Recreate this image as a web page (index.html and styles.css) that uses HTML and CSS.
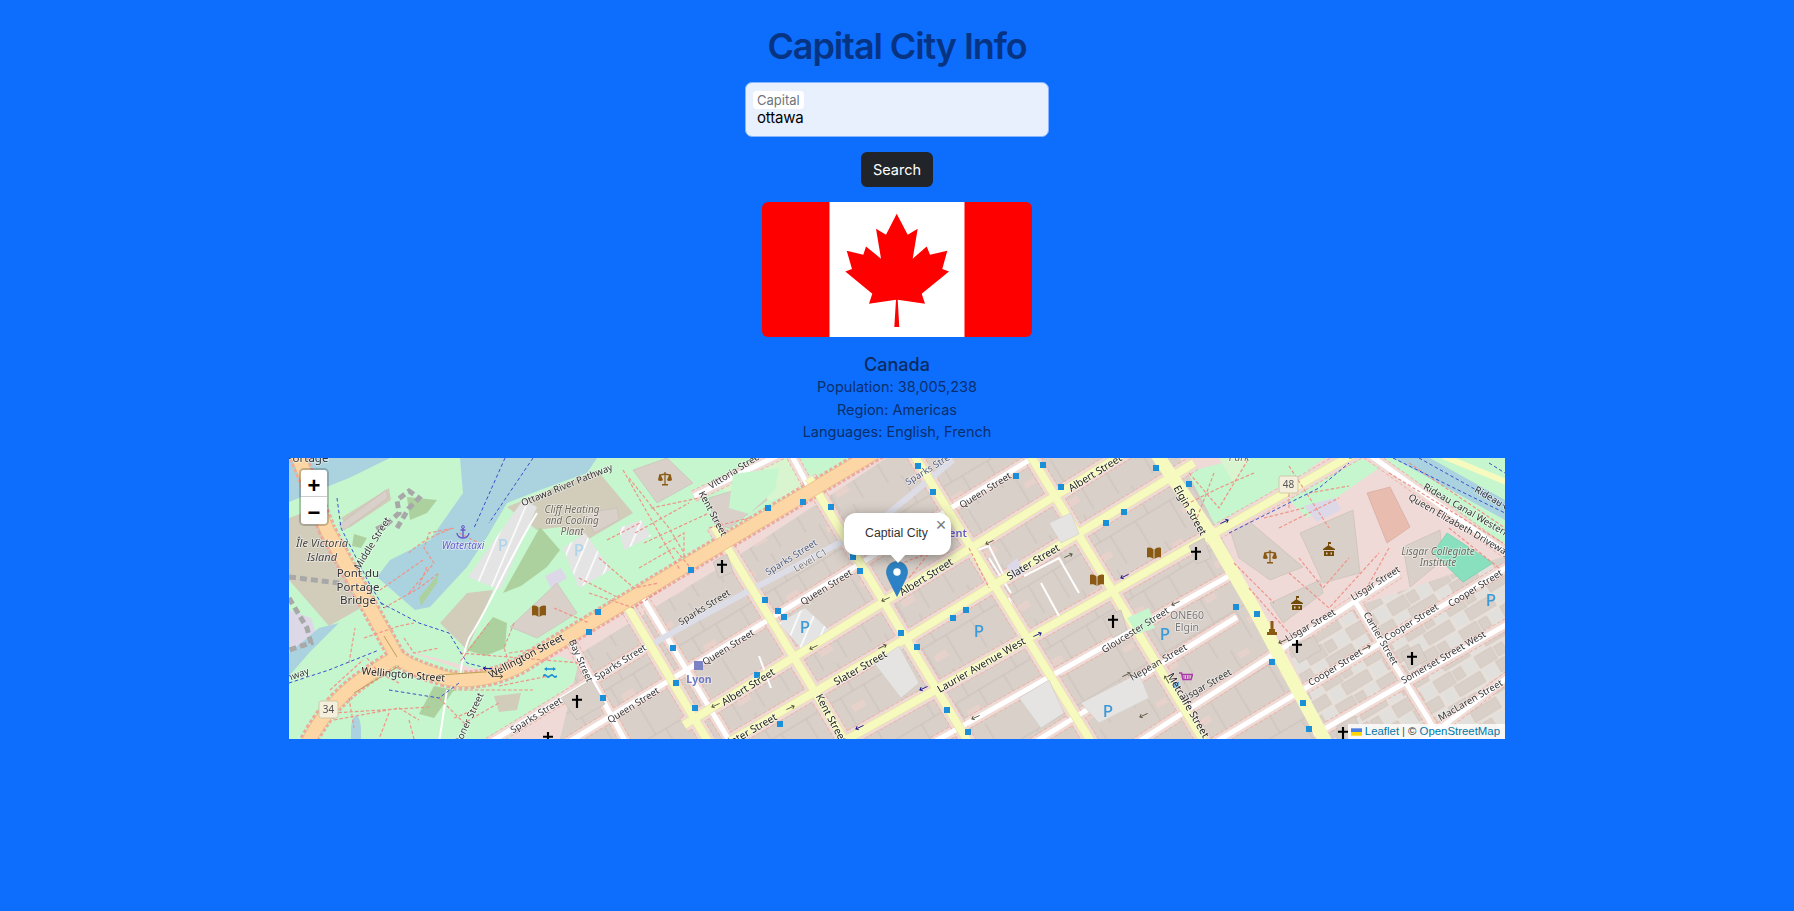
FILE: index.html
```html
<!DOCTYPE html>
<html lang="en">
<head>
<meta charset="utf-8">
<title>Capital City Info</title>
<link rel="stylesheet" href="styles.css">
</head>
<body>
<main class="app">
  <h1 class="title">Capital City Info</h1>
  <form class="search">
    <div class="field">
      <label class="field-label">Capital</label>
      <div class="field-value">ottawa</div>
    </div>
    <button class="btn" type="button">Search</button>
  </form>
  <svg class="flag" viewBox="0 0 270 135" width="270" height="135">
    <rect width="270" height="135" fill="#f00"/>
    <rect x="67.5" width="135" height="135" fill="#fff"/>
    <path fill="#f00" d="M134.7 11.7 145.7 32.7 155.7 26.7 150.7 56.7 164.7 44.4 168 52.7 185.3 48.7 180.3 67 187 69.4 159.7 91.7 163 101.7 135.7 97.7 137.3 125 132.3 125 134 97.7 107 101.7 110.3 91.7 83.3 69.4 90 67 84.7 48.7 101.3 52.7 104 44.4 119 56.7 114 26.7 124 32.7Z"/>
  </svg>
  <section class="info">
    <h2 class="country">Canada</h2>
    <p>Population: 38,005,238</p>
    <p>Region: Americas</p>
    <p>Languages: English, French</p>
  </section>
  <div class="map">
    <svg class="tiles" viewBox="0 0 1216 281" width="1216" height="281">
      <defs>
        <pattern id="bld" width="96" height="64" patternUnits="userSpaceOnUse" patternTransform="rotate(-31) translate(6 10)">
          <rect width="96" height="64" fill="#d9d0c9"/>
          <path d="M0 32H96M30 0V32M70 0V32M15 32V64M55 32V64M82 32V64" fill="none" stroke="#c6bcb3" stroke-width=".7"/>
          <rect x="34" y="6" width="12" height="6" fill="#e6d2ca"/>
          <rect x="60" y="44" width="14" height="7" fill="#e6d2ca"/>
        </pattern>
        <pattern id="bld2" width="48" height="30" patternUnits="userSpaceOnUse" patternTransform="rotate(-31)">
          <rect width="48" height="30" fill="#e8e0da"/>
          <rect x="1" y="1" width="20" height="13" fill="#d9d0c9" stroke="#c9bfb6" stroke-width=".5"/>
          <rect x="23" y="2" width="10" height="11" fill="#d9d0c9" stroke="#c9bfb6" stroke-width=".5"/>
          <rect x="35" y="1" width="12" height="13" fill="#e2e0dc"/>
          <rect x="3" y="16" width="12" height="12" fill="#e2e0dc"/>
          <rect x="17" y="16" width="30" height="12" fill="#d9d0c9" stroke="#c9bfb6" stroke-width=".5"/>
        </pattern>
        <pattern id="lot" width="10" height="14" patternUnits="userSpaceOnUse" patternTransform="rotate(-67)">
          <rect width="10" height="14" fill="#e4e4e4"/>
          <rect y="12" width="10" height="1.5" fill="#fff"/>
        </pattern>
        <path id="wp" d="M270 290 760 -10M195 288 358 189M730 294 948 159M645 284 940 118M840 290 1068 142 1110 115M925 285 1220 108M1025 277 1220 165M1130 286 1220 218M1064 140 1140 262 1160 300M283 186 340 290M354 140 440 282M405 38 500 -8M503 -2 523 35M1078 -5 1222 98"/>
        <path id="yp" d="M395 267 860 -20M440 284 618 180 905 5M548 287 831 129 1054 2 1090 -18M425 68 560 290M520 20 680 285M622 -8 806 290M738 -8 922 295M338 148 420 285"/>
        <path id="ep" d="M865 -8 921 75 964 149 1040 290"/>
        <path id="op" d="M590 -8 411 99 240 202C210 222 170 226 150 218 130 212 115 205 108 199L38 72 22 30 8 -4M108 199C70 222 40 240 15 292"/>
        <symbol id="cross" viewBox="0 0 14 18"><path d="M5.500 0h3v5H14v3H8.500V18h-3V8H0V5h5.500z" fill="#000"/></symbol>
        <symbol id="book" viewBox="0 0 14 12"><path d="M0 1c3-1 5 0 6.500 1.500V12C5 10.500 3 10 0 10.500zM14 1c-3-1-5 0-6.500 1.500V12c1.500-1.500 3.500-2 6.500-1.500z" fill="#8a5a14"/></symbol>
        <symbol id="scales" viewBox="0 0 14 14"><path d="M6.400 0h1.200v1.500L13 2.500V3.500L14 8a2.800 2 0 0 1-5 0l2-4.500-3.400-.6V12H10v1.500H4V12h2.400V2.900L3 3.500 5 8a2.800 2 0 0 1-5 0l1-4.500V2.500l5.400-1z" fill="#8a5a14"/></symbol>
        <symbol id="museum" viewBox="0 0 12 14"><path d="M5 0h3v2H6v1.500L12 7v1H0V7l5-3.500zM1 9h10v5H1zm2 1.500v2h1.500v-2zm4.500 0v2H9v-2z" fill="#734a08"/></symbol>
        <symbol id="statue" viewBox="0 0 10 14"><path d="M3.500 0h3v8h-3zM2 8h6v3H2zM0 11h10v3H0z" fill="#8a5a14"/></symbol>
        <symbol id="anchor" viewBox="0 0 14 14"><path d="M7 3v10M4.500 5h5M1 8c0 3 3 5 6 5s6-2 6-5" fill="none" stroke="#6a5bc9" stroke-width="1.400"/><circle cx="7" cy="2" r="1.400" fill="none" stroke="#6a5bc9"/></symbol>
        <symbol id="cart" viewBox="0 0 14 12"><path d="M0 1h2.500L4 7.500h8L13.500 2.500H3M5 10.500h.1M11 10.500h.1" fill="none" stroke="#ac39ac" stroke-width="1.500"/><path d="M5 3.500v3M7.500 3.500v3M10 3.500v3" stroke="#ac39ac"/></symbol>
        <symbol id="wave" viewBox="0 0 14 12"><path d="M1 2l3-2v1.300h6V0l3 2-3 2V2.800H4V4zM0 8q2-2 3.500 0t3.500 0 3.500 0 3.500 0v2q-2 2-3.500 0t-3.500 0-3.500 0-3.500 0z" fill="#1b8fd8"/></symbol>
        <symbol id="arr" viewBox="0 0 12 6"><path d="M12 3H2M4.500 .5 1.500 3l3 2.500" fill="none" stroke-width="1.100"/></symbol>
      </defs>

      <!-- land -->
      <rect class="l-pink" width="1216" height="281"/>
      <path class="l-park" d="M0 0H590L411 92 240 194 204 215 108 190 0 210Z"/>
      <path class="l-park" d="M0 210 108 190 204 222 270 198 300 210 220 281H0Z"/>
      <path class="l-khaki" d="M0 60 32 48 60 128 72 150 40 168 0 122Z"/>
      <path class="l-lilac" d="M0 152 22 160 30 185 0 205Z"/>
      <path class="l-park" d="M893 15 962 -2H1040L930 66 922 72Z"/>
      <path class="l-lilac" d="M1040 0H1056L1030 18Z"/>
      <path class="l-park" d="M1075 -5H1216V100Z"/>
      <path class="l-park" d="M980 22 1068 -2 1090 10 1018 60Z"/>
      <path class="l-lilac" d="M1015 48 1046 40 1052 52 1028 64Z"/>
      <path class="l-park2" d="M930 0 960 0 945 26Z"/>
      <path class="l-park" d="M310 25 420 0 480 0 405 40 410 100 372 112 345 90Z"/>
      <path class="l-park2" d="M470 0 505 0 530 30 470 45 430 30Z"/>

      <!-- water -->
      <path class="l-water" d="M0 0H101L60 20 0 44Z"/>
      <path class="l-water" d="M171 0H308L298 15 251 32 218 45 198 79 178 109 141 149 126 152 88 119 101 102 141 82 174 35Z"/>
      <path class="l-water" d="M0 195 30 170 50 165 20 195 0 218Z"/>
      <path class="l-water" d="M1104 0H1141L1216 42V62Z"/>
      <path class="l-water" d="M62 272a5 14 0 0 1 10 0v12H62z"/>

      <!-- tan areas -->
      <path class="l-khaki" d="M218 49 308 12 344 55 298 82 271 69 248 72Z"/>
      <path class="l-khaki" d="M151 165 178 135 204 132 178 192Z"/>
      <path class="l-dark" d="M214 135 251 69 271 92 258 109 232 128Z"/>
      <path class="l-dark" d="M178 192 204 159 218 165 216 190 196 198Z"/>
      <path class="l-dark" d="M118 39 148 42 138 55 121 62Z"/>
      <path class="l-dark" d="M65 76 78 80 72 90 63 88Z"/>
      <path class="l-dark" d="M130 140 150 115 148 125 132 148Z"/>
      <path class="l-dark" d="M145 228 165 232 145 260 130 256Z"/>
      <path class="l-khaki" d="M52 60 100 30 102 42 60 70Z"/>
      <path class="l-khaki" d="M205 238 232 235 228 252 210 254Z"/>
      <path class="l-lot" d="M179 119 211 132 248 49 234 42Z"/>
      <path class="l-lot" d="M274 90 296 75 322 112 290 130Z"/>
      <path class="l-lot" d="M330 70 352 62 362 78 335 92Z"/>
      <path class="l-lilac" d="M256 118 272 110 278 120 262 130Z"/>

      <!-- buildings -->
      <path class="b-fill" d="M292 195 405 125 430 110 575 15 600 -2H890L1040 285H270Z"/>
      <path class="b-small" d="M1000 195 1068 148 1216 98V285H1040Z"/>
      <path class="b-solid" d="M221 169 268 125 288 155 248 180Z"/>
      <path class="b-solid" d="M344 12 378 0 404 25 368 45Z"/>
      <path class="b-solid" d="M297 55 328 50 330 62 305 75Z"/>
      <path class="b-solid" d="M50 67 97 32 99 40 55 72Z"/>
      <path class="b-solid" d="M420 40 470 25 478 42 440 70 425 65Z"/>
      <path class="b-solid" d="M941 72 961 64 1014 109 981 122 950 100Z"/>
      <path class="b-solid" d="M1011 75 1064 52 1071 115 1034 125Z"/>
      <path class="b-solid" d="M981 145 1031 122 1034 135 994 165Z"/>
      <path class="b-solid" d="M1114 89 1151 72 1154 102 1121 129Z"/>
      <path class="b-red" d="M1078 35 1101 29 1121 69 1098 85Z"/>
      <path class="l-pitch" d="M1158 75 1204 105 1174 124 1144 95Z"/>

      <!-- roads: dashed sidewalk, pink verge, casing, fill -->
      <g class="sw-w"><use href="#wp"/></g>
      <g class="vg-w"><use href="#wp"/></g>
      <g class="sw-y"><use href="#yp"/></g>
      <g class="vg-y"><use href="#yp"/></g>
      <g class="sw-o"><use href="#op"/></g>
      <g class="r-white"><use href="#wp"/></g>
      <path class="r-ped" d="M358 189 411 159 588 65 664 2"/>
      <path class="r-thin" d="M248 55C220 100 200 150 180 180 172 200 172 215 170 225M158 232 150 285"/>
      <path class="r-thin" d="M665 100 700 88 716 120M700 100 722 135M720 140 730 175M470 198 482 230"/>
      <g class="r-yellow-c"><use href="#yp"/></g>
      <g class="r-yellow"><use href="#yp"/></g>
      <g class="r-elgin"><use href="#ep"/></g>
      <path class="r-yellow-t" d="M1154 -2 1222 26"/>
      <g class="r-orange-c"><use href="#op"/></g>
      <g class="r-orange"><use href="#op"/></g>
      <path class="r-green" d="M65 235 110 208M95 178 108 199M150 217 210 213"/>
      <path class="r-rail" d="M0 119 50 125"/>
      <path class="r-rail" d="M108 70 120 50 130 40 120 33 108 42 110 55 98 66 86 72"/>
      <path class="r-rail" d="M0 140 18 170 22 185 0 192"/>

      <!-- blocks of buildings over the verge -->
      <path class="l-park" d="M838 160 860 150 866 170 848 176Z"/>
      <path class="l-park" d="M444 16 490 10 486 32 460 56 440 50Z"/>
      <path class="b-solid" d="M424 104 438 96 444 114 430 120Z"/>
      <path class="b-solid" d="M814 160 832 152 838 172 824 180Z"/>
      <path class="b-solid" d="M900 88 915 80 922 100 908 106Z"/>
      <path class="b-solid" d="M1000 189 1025 178 1032 192 1010 205Z"/>
      <path class="b-solid" d="M1112 195 1130 186 1138 202 1120 212Z"/>
      <path class="b-solid" d="M1048 268 1066 258 1075 281H1048Z"/>
      <path class="b-solid" d="M272 240 302 222 316 246 288 262Z"/>
      <path class="l-lot" d="M490 165 516 150 540 172 512 190Z"/>
      <path class="l-gray" d="M585 205 610 188 630 225 612 240Z"/>
      <path class="l-gray" d="M730 240 760 222 775 255 752 270Z"/>
      <path class="l-gray" d="M792 245 850 215 860 240 810 265Z"/>
      <path class="l-gray" d="M760 65 782 55 790 76 772 85Z"/>
      <path class="l-lilac" d="M718 108 728 100 736 115 724 120Z"/>
      <path class="r-thin" d="M735 118 770 100 790 135M752 125 770 158"/>

      <!-- paths -->
      <path class="p-foot" d="M120 135 145 105 135 90 140 75 165 70M95 150 130 130 150 115M170 75 190 85M340 20 380 70 395 95M362 50 410 40M370 90 395 75 395 100M310 100 345 130 370 125M290 120 330 140M225 165 215 190 222 210M200 165 170 205M78 200 90 215 110 225M60 205 66 170M75 180 110 168 125 165M115 180 125 195 150 190M45 262 110 250 130 262M60 240 65 270M165 260 190 250M210 228 260 218M120 95Q135 80 165 70M134 102 91 132M138 109 130 128M41 232 74 202M44 255 141 249M164 232 244 232M171 195 291 205M318 82 351 65M334 12 391 112M346 75 400 45M355 85 420 55M350 110 385 90 400 108M300 135 345 150 375 130M220 195 255 190M265 150 300 165M100 255 90 281M120 262 125 281M150 240 175 265 210 245M420 70 460 60M600 110 640 95 620 120M680 90 700 130M900 15 930 50 960 0M965 15 930 30 894 48M925 15 905 68M1000 8 1040 70M975 60 1015 50M1000 50 1000 30M1020 35 1060 28M1010 100 1034 130 1060 100M1000 115 1040 150 1090 95M960 130 1000 175M945 105 985 145M1100 90 1075 135M1160 70 1210 110M1120 5 1216 70M1100 15 1214 85M990 70 1050 40"/>
      <path class="p-blue" d="M92 145 130 165 160 175 175 200 178 205 205 212M100 232 150 240 170 225M0 225 40 212 70 200 90 192M48 40 52 70 80 125 95 150M216 0 185 70M244 0 200 65M940 75 1030 30 1060 5M1104 0 1216 55M1130 0 1216 48M1200 5 1216 15M1060 0 1105 -3"/>

      <!-- transit stops -->
      <path class="stops" d="M626 5h6v6h-6zM641 31h6v6h-6zM724 15h6v6h-6zM751 4h6v6h-6zM769 26h6v6h-6zM814 62h6v6h-6zM476 47h6v6h-6zM511 41h6v6h-6zM539 46h6v6h-6zM561 96h6v6h-6zM568 110h6v6h-6zM473 139h6v6h-6zM486 150h6v6h-6zM492 156h6v6h-6zM609 172h6v6h-6zM625 186h6v6h-6zM661 157h6v6h-6zM674 149h6v6h-6zM465 214h6v6h-6zM488 263h6v6h-6zM655 249h6v6h-6zM676 271h6v6h-6zM399 109h6v6h-6zM306 151h6v6h-6zM297 171h6v6h-6zM381 187h6v6h-6zM384 222h6v6h-6zM311 237h6v6h-6zM403 247h6v6h-6zM864 7h6v6h-6zM897 23h6v6h-6zM832 51h6v6h-6zM944 146h6v6h-6zM965 153h6v6h-6zM980 201h6v6h-6zM884 224h6v6h-6zM1011 242h6v6h-6zM1017 268h6v6h-6z"/>

      <!-- one-way arrows -->
      <g class="arw-navy">
        <use href="#arr" x="193" y="208" width="10" height="5"/>
        <use href="#arr" x="629" y="228" width="10" height="5" transform="rotate(-25 634 230)"/>
        <use href="#arr" x="565" y="267" width="10" height="5" transform="rotate(-25 570 269)"/>
        <use href="#arr" x="744" y="175" width="10" height="5" transform="rotate(155 749 177)"/>
        <use href="#arr" x="830" y="116" width="10" height="5" transform="rotate(-25 835 118)"/>
        <use href="#arr" x="931" y="62" width="10" height="5" transform="rotate(155 936 64)"/>
      </g>
      <g class="arw-dark">
        <use href="#arr" x="205" y="217" width="10" height="5" transform="rotate(180 210 219)"/>
        <use href="#arr" x="591" y="139" width="10" height="5" transform="rotate(-25 596 141)"/>
        <use href="#arr" x="519" y="187" width="10" height="5" transform="rotate(-25 524 189)"/>
        <use href="#arr" x="421" y="245" width="10" height="5" transform="rotate(-25 426 247)"/>
        <use href="#arr" x="695" y="82" width="10" height="5" transform="rotate(-25 700 84)"/>
        <use href="#arr" x="589" y="187" width="10" height="5" transform="rotate(155 594 189)"/>
        <use href="#arr" x="497" y="248" width="10" height="5" transform="rotate(155 502 250)"/>
        <use href="#arr" x="775" y="96" width="10" height="5" transform="rotate(155 780 98)"/>
        <use href="#arr" x="681" y="257" width="10" height="5" transform="rotate(-25 686 259)"/>
        <use href="#arr" x="881" y="143" width="10" height="5" transform="rotate(-25 886 145)"/>
        <use href="#arr" x="988" y="181" width="10" height="5" transform="rotate(-25 993 183)"/>
        <use href="#arr" x="1073" y="188" width="10" height="5" transform="rotate(155 1078 190)"/>
        <use href="#arr" x="833" y="215" width="10" height="5" transform="rotate(155 838 217)"/>
        <use href="#arr" x="873" y="219" width="10" height="5" transform="rotate(60 878 221)"/>
        <use href="#arr" x="849" y="255" width="10" height="5" transform="rotate(-25 854 257)"/>
      </g>

      <!-- point icons -->
      <use href="#cross" x="428" y="102" width="10" height="13"/><use href="#cross" x="819" y="157" width="10" height="13"/><use href="#cross" x="902" y="89" width="10" height="13"/><use href="#cross" x="1003" y="182" width="10" height="13"/><use href="#cross" x="1118" y="194" width="10" height="13"/><use href="#cross" x="283" y="237" width="10" height="13"/><use href="#cross" x="1049" y="269" width="10" height="13"/><use href="#cross" x="254" y="274" width="10" height="13"/>
      <use href="#book" x="243" y="147" width="14" height="12"/><use href="#book" x="801" y="116" width="14" height="12"/><use href="#book" x="858" y="89" width="14" height="12"/>
      <use href="#scales" x="369" y="14" width="14" height="14"/><use href="#scales" x="974" y="92" width="14" height="14"/>
      <use href="#museum" x="1034" y="84" width="12" height="14"/><use href="#museum" x="1002" y="138" width="12" height="14"/>
      <use href="#statue" x="978" y="163" width="10" height="14"/>
      <use href="#anchor" x="167" y="67" width="14" height="14"/>
      <use href="#cart" x="890" y="214" width="14" height="12"/>
      <use href="#wave" x="254" y="209" width="14" height="12"/>
      <rect class="lyon-box" x="405" y="203" width="9" height="9"/>

      <!-- parking -->
      <text class="pk pk-faint" x="214" y="93">P</text>
      <text class="pk pk-faint" x="290" y="98">P</text>
      <text class="pk" x="516" y="175">P</text>
      <text class="pk" x="690" y="179">P</text>
      <text class="pk" x="819" y="259">P</text>
      <text class="pk" x="876" y="182">P</text>
      <text class="pk" x="1202" y="148">P</text>

      <!-- labels -->
      <text class="lb lb-l" x="18" y="4">Portage</text>
      <text class="lb lb-i" x="33" y="89">Île Victoria</text>
      <text class="lb lb-i" x="33" y="103">Island</text>
      <text class="lb lb-l" x="69" y="119">Pont du</text>
      <text class="lb lb-l" x="69" y="133">Portage</text>
      <text class="lb lb-l" x="69" y="146">Bridge</text>
      <text class="lb lb-s" transform="translate(86 87) rotate(-58)">Middle Street</text>
      <text class="lb lb-s" transform="translate(279 30) rotate(-22)">Ottawa River Pathway</text>
      <text class="lb lb-g" x="283" y="55">Cliff Heating</text>
      <text class="lb lb-g" x="283" y="66">and Cooling</text>
      <text class="lb lb-g" x="283" y="77">Plant</text>
      <text class="lb lb-p" x="174" y="91">Watertaxi</text>
      <text class="lb" transform="translate(114 220) rotate(5)">Wellington Street</text>
      <text class="lb" transform="translate(239 201) rotate(-28)">Wellington Street</text>
      <text class="lb lb-s" transform="translate(289 204) rotate(66)">Bay Street</text>
      <text class="lb lb-s" transform="translate(333 207) rotate(-32)">Sparks Street</text>
      <text class="lb lb-s" transform="translate(346 250) rotate(-32)">Queen Street</text>
      <text class="lb lb-s" transform="translate(249 260) rotate(-32)">Sparks Street</text>
      <text class="lb lb-s" transform="translate(175 279) rotate(-65)">Commissioner Street</text>
      <text class="lb lb-s" transform="translate(3 222) rotate(-20)">Pathway</text>
      <text class="lb lb-s" transform="translate(417 152) rotate(-32)">Sparks Street</text>
      <text class="lb lb-s" transform="translate(448 15) rotate(-32)">Vittoria Street</text>
      <text class="lb lb-s" transform="translate(421 57) rotate(62)">Kent Street</text>
      <text class="lb lb-s lb-blue" transform="translate(504 102) rotate(-32)">Sparks Street</text>
      <text class="lb lb-s lb-mid" transform="translate(523 105) rotate(-30)">Level C1</text>
      <text class="lb lb-s" transform="translate(539 132) rotate(-32)">Queen Street</text>
      <text class="lb lb-s" transform="translate(441 192) rotate(-32)">Queen Street</text>
      <text class="lb lb-s" transform="translate(698 35) rotate(-32)">Queen Street</text>
      <text class="lb" transform="translate(639 122) rotate(-32)">Albert Street</text>
      <text class="lb" transform="translate(461 232) rotate(-32)">Albert Street</text>
      <text class="lb" transform="translate(808 18) rotate(-32)">Albert Street</text>
      <text class="lb" transform="translate(573 213) rotate(-30)">Slater Street</text>
      <text class="lb" transform="translate(463 276) rotate(-30)">Slater Street</text>
      <text class="lb" transform="translate(746 107) rotate(-31)">Slater Street</text>
      <text class="lb" transform="translate(694 210) rotate(-30)">Laurier Avenue West</text>
      <text class="lb" transform="translate(539 262) rotate(62)">Kent Street</text>
      <text class="lb lb-s lb-blue" transform="translate(644 12) rotate(-32)">Sparks Street</text>
      <text class="lb lb-p lb-pb" x="669" y="79">ent</text>
      <text class="lb lb-s" transform="translate(848 175) rotate(-32)">Gloucester Street</text>
      <text class="lb" transform="translate(898 54) rotate(60)">Elgin Street</text>
      <text class="lb lb-g" x="1149" y="97">Lisgar Collegiate</text>
      <text class="lb lb-g" x="1149" y="108">Institute</text>
      <text class="lb lb-s" transform="translate(1023 170) rotate(-30)">Lisgar Street</text>
      <text class="lb lb-s" transform="translate(1088 128) rotate(-32)">Lisgar Street</text>
      <text class="lb lb-s" transform="translate(919 230) rotate(-30)">Lisgar Street</text>
      <text class="lb lb-s" transform="translate(1124 167) rotate(-32)">Cooper Street</text>
      <text class="lb lb-s" transform="translate(1188 133) rotate(-32)">Cooper Street</text>
      <text class="lb lb-s" transform="translate(1048 212) rotate(-32)">Cooper Street</text>
      <text class="lb lb-s" transform="translate(1089 182) rotate(60)">Cartier Street</text>
      <text class="lb lb-m" x="898" y="161">ONE60</text>
      <text class="lb lb-m" x="898" y="173">Elgin</text>
      <text class="lb lb-s" transform="translate(871 207) rotate(-30)">Nepean Street</text>
      <text class="lb" transform="translate(896 249) rotate(60)">Metcalfe Street</text>
      <text class="lb lb-s" transform="translate(1156 202) rotate(-30)">Somerset Street West</text>
      <text class="lb lb-s" transform="translate(1183 245) rotate(-30)">MacLaren Street</text>
      <text class="lb lb-s" transform="translate(1169 70) rotate(30)">Queen Elizabeth Driveway</text>
      <text class="lb lb-s" transform="translate(1176 55) rotate(30)">Rideau Canal Western</text>
      <text class="lb lb-s" transform="translate(1210 48) rotate(30)">Rideau Canal</text>
      <text class="lb lb-lyon" x="410" y="225">Lyon</text>
      <text class="lb lb-g" x="950" y="3">Park</text>

      <!-- route shields -->
      <rect class="shield" x="30" y="243" width="19" height="17" rx="2"/>
      <text class="shield-t" x="39.500" y="255">34</text>
      <rect class="shield" x="990" y="18" width="19" height="17" rx="2"/>
      <text class="shield-t" x="999.500" y="30">48</text>
    </svg>

    <div class="zoom">
      <a class="zoom-btn zoom-in">+</a>
      <a class="zoom-btn">−</a>
    </div>

    <svg class="pin" viewBox="0 0 25 41" width="22" height="36">
      <defs>
        <linearGradient id="pg" x1="0" y1="0" x2="0" y2="1"><stop offset="0" stop-color="#2e85c4"/><stop offset="1" stop-color="#2a7fc8"/></linearGradient>
      </defs>
      <path fill="url(#pg)" stroke="#2a72a8" stroke-width=".6" d="M12.500.5C5.800.5.500 5.800.500 12.500c0 3 1.200 6 2.800 9.500l9.200 18.500 9.200-18.500c1.600-3.500 2.800-6.500 2.800-9.500C24.500 5.800 19.200.5 12.500.5z"/>
      <circle cx="12.500" cy="12.500" r="4.200" fill="#fff"/>
    </svg>
    <div class="popup">
      <span class="popup-text">Captial City</span>
      <span class="popup-close">×</span>
      <span class="popup-tip"></span>
    </div>

    <div class="attrib">
      <svg class="ua" viewBox="0 0 12 8" width="11" height="8"><rect width="12" height="4" fill="#4C7BE1"/><rect y="4" width="12" height="4" fill="#FFD500"/></svg>
      <a>Leaflet</a><span class="sep">|</span><span>© <a>OpenStreetMap</a></span>
    </div>
  </div>
</main>
</body>
</html>
```

FILE: styles.css
```css
* { box-sizing: border-box; }
html, body { margin: 0; height: 100%; }
body {
  background: #0d6efd;
  color: #052c65;
  font-family: Inter, "Liberation Sans", sans-serif;
  font-size: 14.500px;
  line-height: 22.500px;
}
.app { display: flex; flex-direction: column; align-items: center; padding-top: 23px; }
.title {
  margin: 0 0 13px;
  font-size: 36px;
  line-height: 46px;
  font-weight: 600;
  letter-spacing: -1.100px;
  color: #073383;
}
.search { display: flex; flex-direction: column; align-items: center; gap: 15px; }
.field {
  width: 304px;
  height: 55px;
  background: #e8f0fe;
  border: 1px solid #86b7fe;
  border-radius: 7px;
  padding: 8px 7px 0;
  display: flex;
  flex-direction: column;
  align-items: flex-start;
}
.field-label {
  background: #fff;
  color: #6c757d;
  font-size: 13px;
  line-height: 18px;
  padding: 0 4px;
  border-radius: 4px;
}
.field-value { color: #000; font-size: 15px; line-height: 18px; letter-spacing: -.2px; padding-left: 4px; }
.btn {
  width: 72px;
  height: 35px;
  background: #212529;
  color: #fff;
  border: 0;
  border-radius: 6px;
  font: 400 14.500px/22px Inter, "Liberation Sans", sans-serif;
  padding: 0;
}
.flag { display: block; margin-top: 15px; border-radius: 6px; }
.info { margin-top: 17px; text-align: center; color: #0a2f6e; }
.info p { margin: 0; }
.country { margin: 0; font-size: 18px; line-height: 22px; font-weight: 500; color: #0a2a60; }
.map { position: relative; width: 1216px; height: 281px; margin-top: 14.500px; overflow: hidden; background: #f2dad9; }
.tiles { display: block; filter: blur(.35px); }

/* map land */
.l-pink { fill: #f0dad7; }
.l-park { fill: #c6f6ce; }
.l-park2 { fill: #d8f5d0; }
.l-khaki { fill: #d2cdbb; }
.l-dark { fill: #add19e; }
.l-water { fill: #aad3df; }
.l-lilac { fill: #dcd8e8; }
.l-lot { fill: url(#lot); }
.l-gray { fill: #e6e4e2; stroke: #d0ccc6; stroke-width: .6; }
.l-pitch { fill: #88e0be; stroke: #70c8a8; stroke-width: .6; }
.b-fill { fill: url(#bld); }
.b-small { fill: url(#bld2); }
.b-solid { fill: #d9d0c9; stroke: #c6bcb3; stroke-width: .6; }
.b-red { fill: #e8bdb0; stroke: #d0a596; stroke-width: .6; }

/* map roads */
.sw-w, .sw-y, .sw-o, .vg-w, .vg-y, .r-white, .r-yellow, .r-yellow-c, .r-elgin, .r-orange, .r-orange-c { fill: none; }
.sw-w { stroke: #efaa9f; stroke-width: 12; stroke-dasharray: 3.500 2; }
.vg-w { stroke: #eedbd6; stroke-width: 10.500; }
.sw-y { stroke: #efaa9f; stroke-width: 16; stroke-dasharray: 3.500 2; }
.vg-y { stroke: #eedbd6; stroke-width: 14.500; }
.sw-o { stroke: #efaa9f; stroke-width: 19; stroke-dasharray: 3.500 2; }
.r-white { stroke: #fff; stroke-width: 5; }
.r-ped { fill: none; stroke: #dddde8; stroke-width: 6; }
.r-thin { fill: none; stroke: #fff; stroke-width: 2; }
.r-yellow-c { stroke: #eae7a8; stroke-width: 9; }
.r-yellow { stroke: #f7fabf; stroke-width: 7.500; }
.r-elgin { stroke: #f7fabf; stroke-width: 13; }
.r-yellow-t { fill: none; stroke: #f7fabf; stroke-width: 6; }
.r-orange-c { stroke: #e6b67e; stroke-width: 14; }
.r-orange { stroke: #fcd6a4; stroke-width: 13; }
.r-green { fill: none; stroke: #b89a50; stroke-width: .9; }
.r-rail { fill: none; stroke: #a8a8a8; stroke-width: 5; stroke-dasharray: 7 4; }
.p-foot { fill: none; stroke: #ee9488; stroke-width: 1.200; stroke-dasharray: 3.500 2; }
.p-blue { fill: none; stroke: #3c4fd0; stroke-width: 1; stroke-dasharray: 3.500 2.500; }
.stops { fill: #1c8fd9; }
.arw-navy { stroke: #14148c; }
.arw-dark { stroke: #55553f; }
.lyon-box { fill: #7b83c4; }

/* map text */
.lb {
  font-family: "Noto Sans", "DejaVu Sans", sans-serif;
  font-size: 10.300px;
  fill: #222;
  text-anchor: middle;
  stroke: #fff;
  stroke-opacity: .55;
  stroke-width: 1.500px;
  paint-order: stroke;
}
.lb-s { font-size: 9.500px; fill: #333; }
.lb-l { font-size: 11.500px; fill: #333; }
.lb-i { font-size: 11px; font-style: italic; fill: #444; }
.lb-g { font-size: 10px; font-style: italic; fill: #6f6a60; }
.lb-m { font-size: 10.500px; fill: #777; }
.lb-p { font-size: 10px; font-style: italic; fill: #6a5bc9; }
.lb-pb { font-style: normal; font-weight: 600; font-size: 11px; }
.lb-blue { fill: #4a5a80; }
.lb-mid { fill: #777; }
.lb-lyon { font-size: 10.500px; font-weight: 700; fill: #6a78c0; }
.pk { font-family: "Noto Sans", sans-serif; font-size: 17px; font-weight: 500; fill: #3a9ad8; text-anchor: middle; }
.pk-faint { fill: #b0d4ea; }
.shield { fill: #f5eedd; stroke: #c8bfa0; stroke-width: .8; }
.shield-t { font-family: "Noto Sans", sans-serif; font-size: 10px; fill: #555; text-anchor: middle; }

/* leaflet controls */
.zoom {
  position: absolute;
  left: 10px;
  top: 10px;
  width: 30px;
  display: flex;
  flex-direction: column;
  border: 2px solid rgba(0, 0, 0, .2);
  border-radius: 5px;
  background-clip: padding-box;
}
.zoom-btn {
  width: 26px;
  height: 27px;
  background: #fff;
  color: #000;
  text-align: center;
  font: 700 22px/32px "Liberation Sans", sans-serif;
  border-radius: 0 0 3px 3px;
}
.zoom-in { border-bottom: 1px solid #ccc; border-radius: 3px 3px 0 0; }
.pin { position: absolute; left: 597px; top: 103px; }
.popup {
  position: absolute;
  left: 555px;
  top: 55px;
  width: 107px;
  height: 42px;
  background: #fff;
  border-radius: 12px;
  box-shadow: 0 3px 14px rgba(0, 0, 0, .4);
  color: #333;
  font: 12.300px/18px "Liberation Sans", sans-serif;
  text-align: center;
  padding: 11px 0 0 0;
}
.popup-text { position: relative; left: -1px; }
.popup-close {
  position: absolute;
  right: 1px;
  top: 3px;
  width: 18px;
  height: 18px;
  color: #757575;
  font: 18px/18px "Liberation Sans", sans-serif;
  text-align: center;
}
.popup-tip {
  position: absolute;
  left: 45px;
  top: 40px;
  width: 18px;
  height: 10px;
  clip-path: polygon(0 0, 100% 0, 50% 100%);
  background: #fff;
}
.attrib {
  position: absolute;
  right: 0;
  bottom: 0;
  height: 15px;
  padding: 0 5px 0 3px;
  display: flex;
  align-items: center;
  gap: 3px;
  background: rgba(255, 255, 255, .8);
  color: #333;
  font: 11.400px/15px "Liberation Sans", sans-serif;
  white-space: nowrap;
}
.attrib a { color: #0078a8; }
.sep { color: #555; }
```
